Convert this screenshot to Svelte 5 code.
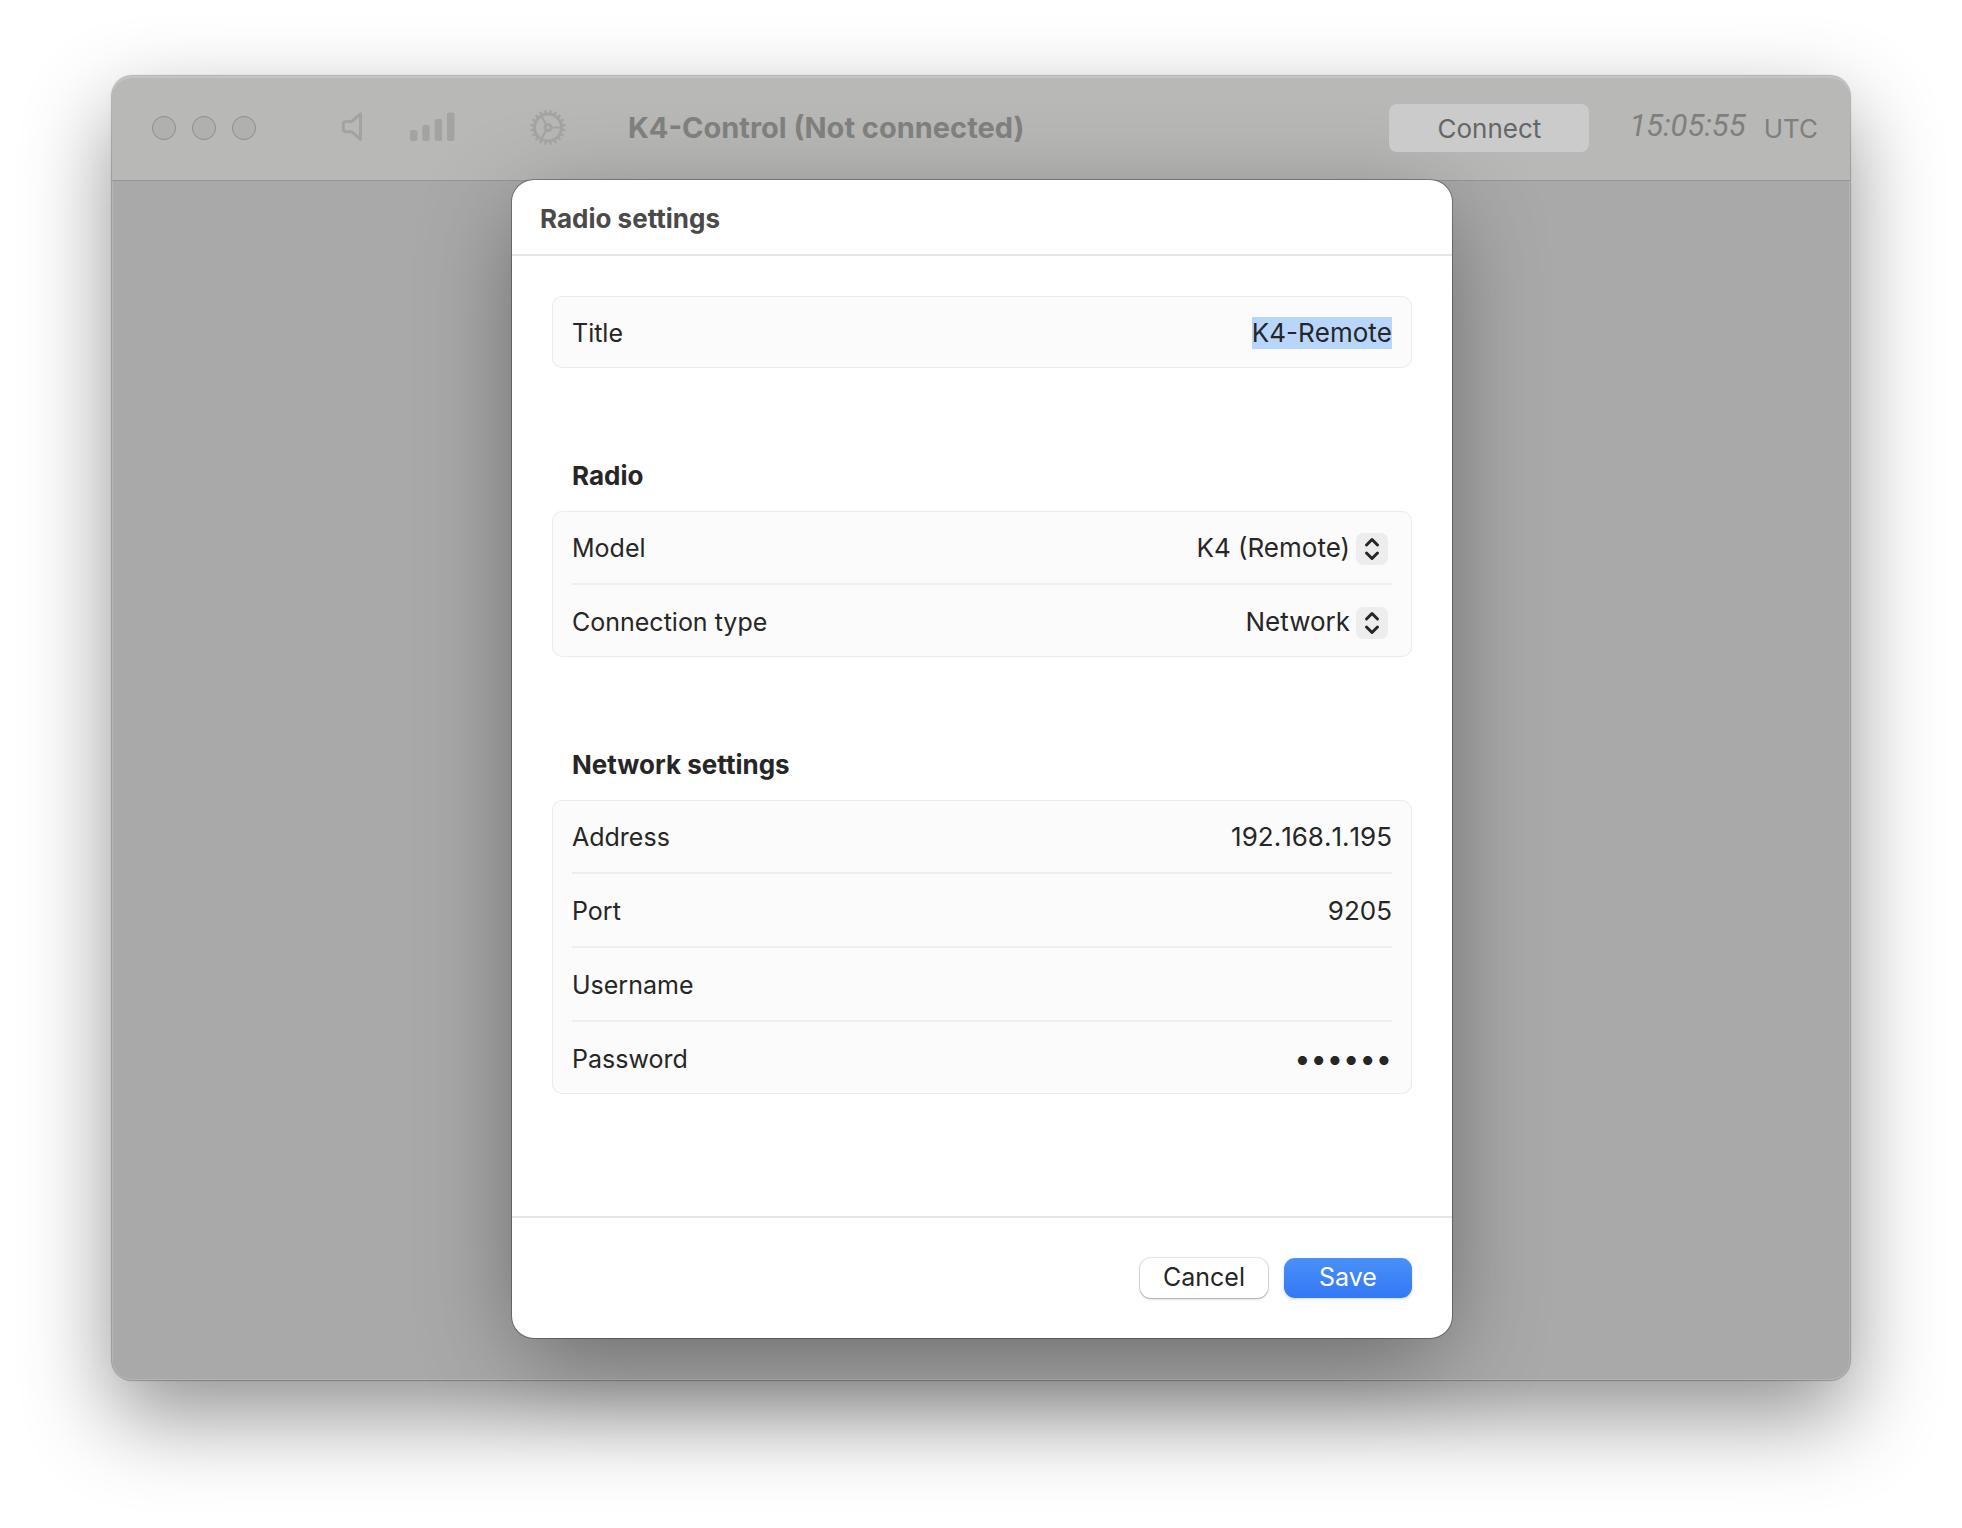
<script lang="ts">
    import { onMount } from 'svelte';

    let titleInput: HTMLInputElement;

    let title = 'K4-Remote';
    let model = 'K4 (Remote)';
    let connection = 'Network';
    let address = '192.168.1.195';
    let port = '9205';
    let username = '';
    let password = 'remote';

    const teeth = Array.from({ length: 20 }, (_, i) => i * 18);

    onMount(() => {
        titleInput.focus();
        titleInput.select();
    });
</script>

<div class="desktop">
    <div class="window">
        <header class="titlebar">
            <div class="lights">
                <button aria-label="Close"></button>
                <button aria-label="Minimize"></button>
                <button aria-label="Zoom"></button>
            </div>
            <svg class="speaker" viewBox="0 0 22 32" width="22" height="32" aria-hidden="true">
                <path d="M19.500 1.800V27.400L10.500 19.700H5Q2.300 19.700 2.300 17.200V12Q2.300 9.500 5 9.500H10.500Z" />
            </svg>
            <svg class="signal" viewBox="0 0 46 32" width="46" height="32" aria-hidden="true">
                <rect x="0" y="18" width="7.400" height="11" rx="2" />
                <rect x="12.300" y="13" width="7.400" height="16" rx="2" />
                <rect x="24.700" y="7" width="7.400" height="22" rx="2" />
                <rect x="37" y="0.400" width="7.400" height="28.600" rx="2" />
            </svg>
            <svg class="gear" viewBox="-18 -17.500 36 36" width="36" height="36" aria-hidden="true">
                <circle r="13.500" />
                <circle r="3" />
                <path d="M3 0H14M-1.500 -2.600L-7 -12.100M-1.500 2.600L-7 12.100" />
                {#each teeth as angle}
                    <path class="tooth" d="M15 0H16.500" transform={`rotate(${angle + 9})`} />
                {/each}
            </svg>
            <h1>K4-Control (Not connected)</h1>
            <button class="connect">Connect</button>
            <time>15:05:55</time>
            <span class="zone">UTC</span>
        </header>

        <main>
            <form class="dialog" role="dialog" aria-labelledby="dialog-title" on:submit|preventDefault>
                <h2 id="dialog-title">Radio settings</h2>

                <div class="content">
                    <div class="group">
                        <div class="row">
                            <label for="title">Title</label>
                            <input id="title" type="text" bind:this={titleInput} bind:value={title} />
                        </div>
                    </div>

                    <section>
                        <h3>Radio</h3>
                        <div class="group">
                            <div class="row">
                                <label for="model">Model</label>
                                <div class="picker">
                                    <select id="model" bind:value={model}>
                                        <option>K4 (Remote)</option>
                                    </select>
                                    <svg viewBox="0 0 32 32" width="32" height="32" aria-hidden="true">
                                        <path d="M10.500 12L16 6.500L21.500 12M10.500 20L16 25.500L21.500 20" />
                                    </svg>
                                </div>
                            </div>
                            <div class="row">
                                <label for="connection">Connection type</label>
                                <div class="picker">
                                    <select id="connection" bind:value={connection}>
                                        <option>Network</option>
                                    </select>
                                    <svg viewBox="0 0 32 32" width="32" height="32" aria-hidden="true">
                                        <path d="M10.500 12L16 6.500L21.500 12M10.500 20L16 25.500L21.500 20" />
                                    </svg>
                                </div>
                            </div>
                        </div>
                    </section>

                    <section>
                        <h3>Network settings</h3>
                        <div class="group">
                            <div class="row">
                                <label for="address">Address</label>
                                <input id="address" type="text" bind:value={address} />
                            </div>
                            <div class="row">
                                <label for="port">Port</label>
                                <input id="port" type="text" bind:value={port} />
                            </div>
                            <div class="row">
                                <label for="username">Username</label>
                                <input id="username" type="text" bind:value={username} />
                            </div>
                            <div class="row">
                                <label for="password">Password</label>
                                <input id="password" type="password" bind:value={password} />
                            </div>
                        </div>
                    </section>
                </div>

                <footer>
                    <button class="cancel" type="button">Cancel</button>
                    <button class="save" type="submit">Save</button>
                </footer>
            </form>
        </main>
    </div>
</div>

<style>
    :global(body) {
        background: #fff;
    }

    .desktop {
        padding: 76px 112px 148px;
        font-family: Inter, "Liberation Sans", sans-serif;
        font-size: 25px;
        line-height: 32px;
        color: #262626;
        overflow: hidden;
    }

    .window {
        border-radius: 20px;
        background: #a9a9a9;
        box-shadow: 0 0 1px 1px rgba(0, 0, 0, 0.25), 0 36px 88px rgba(0, 0, 0, 0.43), inset 0 0 0 1px rgba(255, 255, 255, 0.15);
    }

    h1, h2, h3 {
        margin: 0;
        font-size: 26px;
        font-weight: 700;
    }

    button, input, select {
        font: inherit;
        color: inherit;
        margin: 0;
        padding: 0;
        border: none;
        outline: none;
        background: none;
    }

    .titlebar {
        display: flex;
        align-items: center;
        height: 104px;
        box-sizing: border-box;
        padding: 0 32px 0 40px;
        border-radius: 20px 20px 0 0;
        background: #b8b8b6;
        box-shadow: inset 0 2px 0 #c3c5c2, 0 1px 0 #979797;
        color: #7f7f7d;
    }

    .lights {
        display: flex;
        gap: 16px;
    }

    .lights button {
        width: 24px;
        height: 24px;
        border: 1px solid #8d8d8b;
        border-radius: 50%;
        background: #b1b0ae;
    }

    .titlebar svg {
        flex: none;
        fill: none;
        stroke: #a3a3a2;
        stroke-width: 3;
        stroke-linejoin: round;
    }

    .speaker {
        margin-left: 85px;
    }

    .titlebar .signal {
        margin-left: 47px;
        fill: #a3a3a2;
        stroke: none;
    }

    .titlebar .gear {
        margin-left: 74px;
        stroke-width: 3;
    }

    .titlebar .gear path {
        stroke-width: 2;
    }

    .titlebar .gear .tooth {
        stroke-width: 2.5;
        stroke-linecap: round;
    }

    h1 {
        flex: 1;
        margin-left: 62px;
        font-size: 29px;
    }

    .connect {
        width: 200px;
        height: 48px;
        padding-top: 2px;
        border-radius: 8px;
        background: #cbcbcb;
        font-size: 26px;
        color: #666;
    }

    time {
        margin-left: 40px;
        padding-bottom: 4px;
        font-family: Roboto, sans-serif;
        font-size: 31px;
        font-style: italic;
    }

    .zone {
        margin-left: 18px;
        padding-top: 2px;
        font-size: 26px;
    }

    main {
        padding: 0 40px 42px 42px;
    }

    .dialog {
        max-width: 940px;
        margin: 0 auto;
        border-radius: 22px;
        background: #fff;
        box-shadow: 0 0 0 1px rgba(0, 0, 0, 0.3), 0 24px 100px -10px rgba(0, 0, 0, 0.42);
    }

    h2 {
        padding: 23px 28px 19px;
        border-bottom: 2px solid #e5e5e5;
        color: #4a4a4a;
    }

    .content {
        padding: 40px 40px 122px;
    }

    section {
        margin-top: 92px;
    }

    h3 {
        padding: 0 20px 19px;
    }

    .group {
        padding: 0 20px;
        border-radius: 10px;
        background: #fbfbfb;
        box-shadow: inset 0 0 0 1px #ebebeb;
    }

    .row {
        display: flex;
        align-items: center;
        height: 70px;
        padding-top: 2px;
    }

    .row + .row {
        border-top: 2px solid #eee;
    }

    .row input {
        flex: 1;
        min-width: 0;
        height: 32px;
        font-size: 26px;
        text-align: right;
        font-kerning: none;
    }

    .row input[type="password"] {
        font-size: 29px;
    }

    .row input::selection {
        background: #b8d6fb;
        color: #262626;
    }

    .picker {
        flex: 1;
        display: grid;
        align-items: center;
    }

    .picker select, .picker svg {
        grid-area: 1 / 1;
    }

    .picker select {
        appearance: none;
        padding-right: 42px;
        font-size: 26px;
        text-align: right;
        text-align-last: right;
    }

    .picker svg {
        justify-self: end;
        margin: 2px 4px 0 0;
        border-radius: 7px;
        background: #ededed;
        fill: none;
        stroke: #262626;
        stroke-width: 3;
        stroke-linecap: round;
        stroke-linejoin: round;
        pointer-events: none;
    }

    footer {
        display: flex;
        justify-content: flex-end;
        gap: 16px;
        padding: 40px;
        border-top: 2px solid #e5e5e5;
    }

    footer button {
        width: 128px;
        height: 40px;
        padding-bottom: 2px;
        border-radius: 11px;
    }

    .cancel {
        background: #fff;
        box-shadow: 0 0 1px 1px rgba(0, 0, 0, 0.1), 0 1px 2px rgba(0, 0, 0, 0.3);
    }

    .save {
        background: linear-gradient(#4a90f8, #3377f6);
        box-shadow: 0 1px 3px rgba(51, 119, 246, 0.3);
        color: #fff;
    }
</style>
